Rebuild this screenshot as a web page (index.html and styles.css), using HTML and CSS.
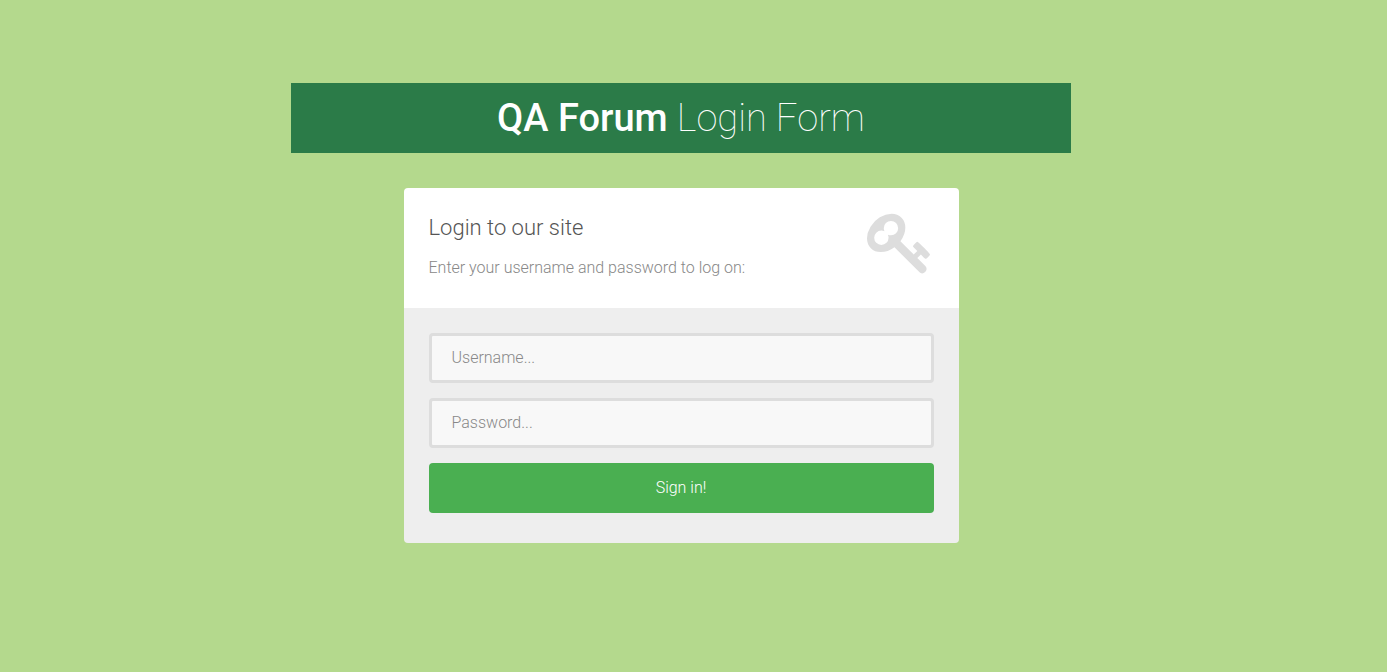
FILE: index.html
```html
<!DOCTYPE html>
<html lang="en">
<head>
<meta charset="utf-8">
<title>QA Forum Login Form</title>
<link rel="stylesheet" href="styles.css">
</head>
<body>
<main class="page">
  <h1 class="title"><strong>QA Forum</strong> Login Form</h1>
  <section class="card">
    <header class="card-top">
      <div>
        <h3>Login to our site</h3>
        <p>Enter your username and password to log on:</p>
      </div>
      <svg class="key" viewBox="0 0 1683 1536" aria-hidden="true"><path transform="translate(0 1536) scale(1 -1)" d="M832 1024q0 80 -56 136t-136 56t-136 -56t-56 -136q0 -42 19 -83q-41 19 -83 19q-80 0 -136 -56t-56 -136t56 -136t136 -56t136 56t56 136q0 42 -19 83q41 -19 83 -19q80 0 136 56t56 136zM1683 320q0 -17 -49 -66t-66 -49q-9 0 -28.500 16t-36.500 33t-38.500 40t-24.500 26l-96 -96l220 -220q28 -28 28 -68q0 -42 -39 -81t-81 -39q-40 0 -68 28l-671 671q-176 -131 -365 -131q-163 0 -265.500 102.500t-102.500 265.500q0 160 95 313t248 248t313 95q163 0 265.500 -102.500t102.500 -265.500q0 -189 -131 -365l355 -355l96 96q-3 3 -26 24.500t-40 38.500t-33 36.500t-16 28.500q0 17 49 66t66 49q13 0 23 -10q6 -6 46 -44.500t82 -79.500t86.500 -86t73 -78t28.500 -41z"/></svg>
    </header>
    <form class="card-bottom">
      <input type="text" placeholder="Username..." aria-label="Username">
      <input type="password" placeholder="Password..." aria-label="Password">
      <button type="button">Sign in!</button>
    </form>
  </section>
</main>
</body>
</html>
```
FILE: styles.css
```css
* { box-sizing: border-box; }
body {
  margin: 0;
  min-height: 672px;
  background: #b4d98d;
  font: 300 16px/30px Roboto, sans-serif;
  color: #888;
}
.page {
  width: 780px;
  margin-left: 291px;
  padding-top: 83px;
}
.title {
  margin: 0;
  height: 70px;
  background: #2b7b48;
  color: #fff;
  font-size: 38px;
  font-weight: 100;
  line-height: 70px;
  text-align: center;
}
.title strong { font-weight: 500; }
.card {
  width: 555px;
  margin: 35px auto 0 113px;
}
.card-top {
  display: flex;
  justify-content: space-between;
  height: 120px;
  padding: 25px 29px 0 24.5px;
  background: #fff;
  border-radius: 4px 4px 0 0;
}
.card-top h3 {
  margin: 0;
  color: #555;
  font-size: 22px;
  font-weight: 300;
  line-height: 30px;
}
.card-top p { margin: 10px 0 0; }
.key {
  width: 63px;
  height: 57.5px;
  margin-top: -4px;
  fill: #ddd;
  overflow: visible;
}
.card-bottom {
  display: flex;
  flex-direction: column;
  gap: 15px;
  padding: 25px 25px 30px;
  background: #eee;
  border-radius: 0 0 4px 4px;
}
.card-bottom input {
  width: 100%;
  height: 50px;
  padding: 0 19.5px;
  border: 3px solid #ddd;
  border-radius: 4px;
  background: #f8f8f8;
  color: #888;
  font: 300 16px/50px Roboto, sans-serif;
}
.card-bottom input::placeholder { color: #888; }
.card-bottom button {
  height: 50px;
  padding: 0 1px 0 0;
  border: 0;
  border-radius: 4px;
  background: #4aaf51;
  color: #fff;
  font: 300 16px/50px Roboto, sans-serif;
}
```
